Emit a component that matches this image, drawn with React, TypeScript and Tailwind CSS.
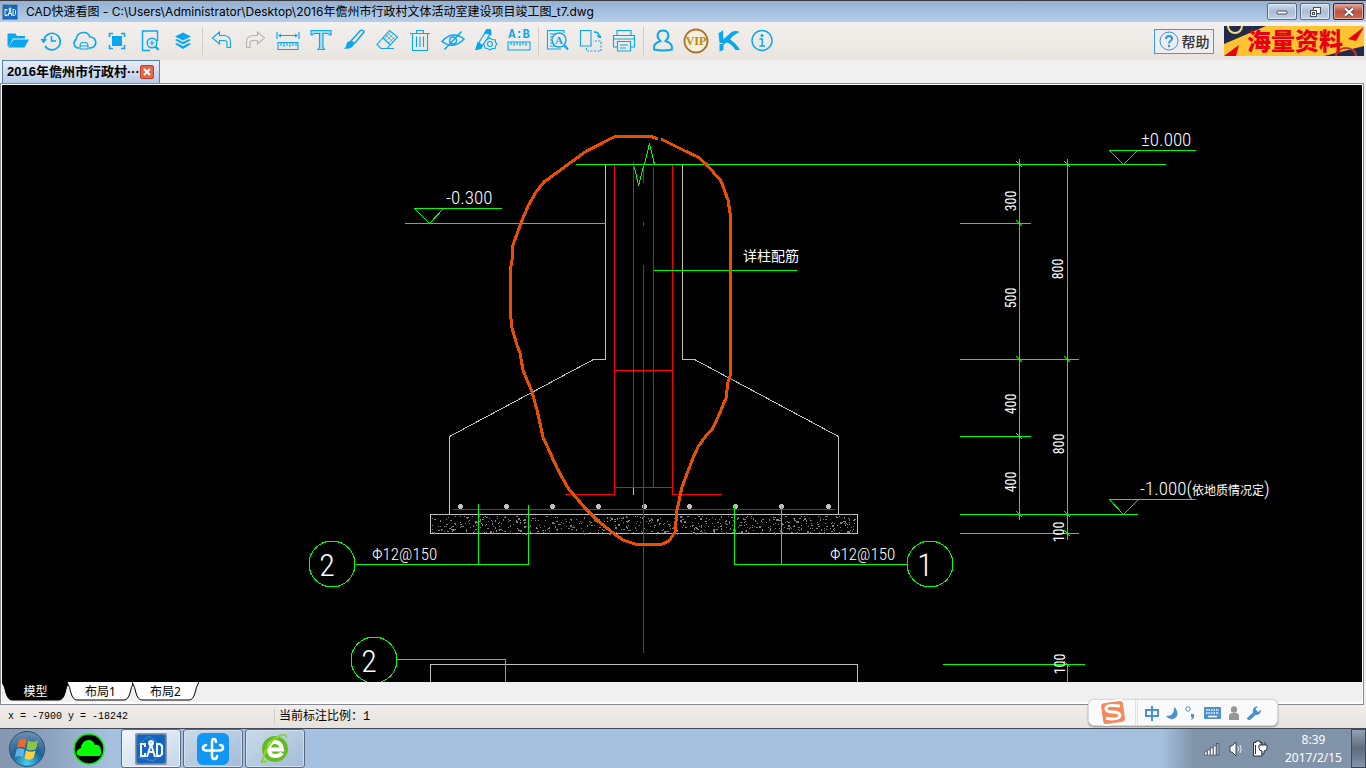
import React, { useState } from 'react';
import clsx from 'clsx';

type Line = [number, number, number, number];

const TITLE_FONT = "font-['Inter','Noto_Sans_CJK_SC',sans-serif]";
const UI_FONT = "font-['Noto_Sans','Noto_Sans_CJK_SC',sans-serif]";
const MONO_FONT = "font-['Liberation_Mono','Noto_Sans_CJK_SC',monospace]";
const CAD_FONT = "font-['Roboto_Condensed','Roboto','Noto_Sans_CJK_SC',sans-serif]";

const GREEN_LINES: Line[] = [
  // ground level and left elevation
  [576, 164, 1165, 164],
  [414, 208, 501, 208],
  [405, 223, 605, 223],
  [654, 270, 796, 270],
  // rebar leaders
  [478, 504, 478, 564],
  [528, 505, 528, 564],
  [356, 564, 528, 564],
  [734, 505, 734, 564],
  [781, 506, 781, 564],
  [735, 564, 907, 564],
  [397, 659, 505, 659],
  [505, 659, 505, 684],
  // dimension chains
  [1019, 159, 1019, 519],
  [1067, 159, 1067, 539],
  [1067, 664, 1067, 684],
  [960, 223, 1030, 223],
  [960, 359, 1078, 359],
  [960, 436, 1030, 436],
  [960, 514, 1137, 514],
  [960, 533, 1078, 533],
  [943, 664, 1084, 664],
  // right elevations
  [1109, 150, 1195, 150],
  [1109, 499, 1195, 499],
];

const RED_LINES: Line[] = [
  [614, 165, 614, 494],
  [633, 162, 633, 487],
  [643, 165, 643, 182],
  [643, 222, 643, 225],
  [643, 265, 643, 652],
  [653, 167, 653, 487],
  [672, 165, 672, 494],
  [614, 370, 672, 370],
  [614, 487, 672, 487],
  [565, 494, 614, 494],
  [672, 494, 721, 494],
];

const TICKS: [number, number][] = [
  [1019, 164], [1019, 223], [1019, 359], [1019, 436], [1019, 514],
  [1067, 164], [1067, 359], [1067, 514], [1067, 533], [1067, 664],
];

const REBARS = [460, 506, 552, 598, 644, 689, 735, 781, 828];

const DIMENSIONS = [
  { text: '300', x: 1016, y: 201 },
  { text: '500', x: 1016, y: 298 },
  { text: '400', x: 1016, y: 404 },
  { text: '400', x: 1016, y: 482 },
  { text: '800', x: 1063, y: 269 },
  { text: '800', x: 1064, y: 444 },
  { text: '100', x: 1064, y: 532 },
  { text: '100', x: 1065, y: 664 },
];

const BUBBLES = [
  { label: '2', cx: 332, cy: 564 },
  { label: '1', cx: 930, cy: 564 },
  { label: '2', cx: 374, cy: 660 },
];

const CLOUD_MARK =
  'M658 139 L650 136 L616 136 L606 141 L585 152 L544 182 L536 192 L528 206 L521 223 L513 245 L512 260 L510 273 L510 309 L512 328 L516 342 L520 353 L523 370 L532 392 L537 410 L543 437 L557 468 L568 488 L585 508 L597 520 L613 533 L623 540 L635 544 L662 544 L669 541 L675 532 L677 510 L682 487 L693 458 L698 447 L705 437 L713 428 L718 417 L726 398 L728 382 L730 376 L730 213 L728 200 L721 181 L706 164 L698 157 L683 150 L661 139';

// aggregate speckles of the concrete bed
const speckles = (() => {
  let seed = 7;
  const next = () => {
    seed = (seed * 16807) % 2147483647;
    return seed / 2147483647;
  };
  const result: { x: number; y: number; w: number; h: number }[] = [];
  for (let i = 0; i < 620; i++) {
    result.push({
      x: 431 + Math.floor(next() * 425),
      y: 515 + Math.floor(next() * 18),
      w: next() > 0.8 ? 2 : 1,
      h: next() > 0.85 ? 2 : 1,
    });
  }
  return result;
})();

const Drawing: React.FC = () => (
  <svg
    viewBox="2 85 1360 597"
    preserveAspectRatio="xMidYMid slice"
    className="w-full h-full bg-black"
    role="img"
    aria-label="基础剖面图"
  >
    <g transform="translate(0.5 0.5)" fill="none" strokeWidth="1" strokeLinecap="square" shapeRendering="crispEdges">
      <g stroke="#c0c0c0">
        <path d="M605 165 V359 H593 L449 436 V514" />
        <path d="M682 165 V359 H694 L838 436 V514" />
        <path d="M633 487 V494" />
        <rect x="430" y="514" width="427" height="19" />
        <path d="M430 684 V664 H857 V684" />
      </g>
      {speckles.map((s, i) => (
        <rect key={i} x={s.x} y={s.y} width={s.w} height={s.h} fill="#808080" />
      ))}
      {REBARS.map(x => (
        <circle key={x} cx={x} cy="506" r="2.5" fill="#c0c0c0" />
      ))}
      <g stroke="#ff0000">
        <path d="M453 509 H834" />
        {RED_LINES.map(([x1, y1, x2, y2], i) => (
          <line key={i} x1={x1} y1={y1} x2={x2} y2={y2} />
        ))}
      </g>
      <g stroke="#00ff00">
        {GREEN_LINES.map(([x1, y1, x2, y2], i) => (
          <line key={i} x1={x1} y1={y1} x2={x2} y2={y2} />
        ))}
        <path d="M634 167 L638 185 L643 166 M644 164 L649 143 L654 164" />
        <path d="M414 208 L429 223 L443 208" />
        <path d="M1109 150 L1123 164 L1137 150" />
        <path d="M1109 499 L1123 514 L1138 499" />
        {TICKS.map(([x, y]) => (
          <path key={`${x}-${y}`} d={`M${x - 3} ${y - 3} l5 5`} />
        ))}
      </g>
    </g>
    <g fill="none" shapeRendering="crispEdges">
      {BUBBLES.map(b => (
        <circle key={`${b.cx}-${b.cy}`} cx={b.cx} cy={b.cy} r="23" stroke="#00ff00" />
      ))}
      <path d={CLOUD_MARK} stroke="#e85000" strokeWidth="3" strokeLinejoin="round" />
    </g>

    <g fill="#ffffff" className={CAD_FONT}>
      <g fontSize="19" fontWeight="300">
        <text x="446" y="204">-0.300</text>
        <text x="1141" y="146">±0.000</text>
        <text x="1140" y="495">
          -1.000(<tspan fontSize="12" fontWeight="400">依地质情况定</tspan>)
        </text>
      </g>
      <g fontSize="17" fontWeight="300">
        <text x="372" y="560">Φ12@150</text>
        <text x="830" y="560">Φ12@150</text>
      </g>
      <text x="743" y="261" fontSize="14">详柱配筋</text>
      {BUBBLES.map(b => (
        <text
          key={`${b.cx}-${b.cy}`}
          x={b.cx - 5}
          y={b.cy + 12}
          fontSize="32"
          fontWeight="300"
          textAnchor="middle"
        >
          {b.label}
        </text>
      ))}
      {DIMENSIONS.map(d => (
        <text
          key={`${d.x}-${d.y}`}
          fontSize="14"
          textAnchor="middle"
          transform={`translate(${d.x} ${d.y}) rotate(-90)`}
        >
          {d.text}
        </text>
      ))}
    </g>
  </svg>
);

interface Tool {
  name: string;
  icon: React.ReactNode;
}

const FILE_TOOLS: Tool[] = [
  {
    name: '打开',
    icon: (
      <g fill="currentColor" stroke="none">
        <path d="M1.500 17 V4.500 H9.500 L11 7 H19 V9.500 H7 L3 17 Z" />
        <path d="M7.500 10.500 H23 L18.500 18.500 H2 Z" />
      </g>
    ),
  },
  {
    name: '最近',
    icon: (
      <>
        <path d="M6 17 A8.300 8.300 0 1 0 5 10.500" strokeWidth="1.600" />
        <path d="M1.500 10 H8 L4.500 14.500 Z" fill="currentColor" stroke="none" />
        <path d="M12.500 7 V12 H17" strokeWidth="1.600" />
      </>
    ),
  },
  {
    name: '云盘',
    icon: (
      <>
        <path d="M7 19 H5.500 A4.800 4.800 0 0 1 4 10.500 Q5 4 11 3.500 Q16 3 18 8 A5.500 5.500 0 0 1 18.500 19 H17" strokeWidth="1.600" />
        <path d="M8 17.500 Q8 13.500 10.500 13.500 H13.500 Q16 13.500 16 17.500 V20 H8 Z M8 17 H16" />
      </>
    ),
  },
  {
    name: '全图',
    icon: (
      <>
        <rect x="7" y="7" width="10" height="10" fill="currentColor" stroke="none" />
        <path d="M4.500 8 V4.500 H8 M16 4.500 H19.500 V8 M19.500 16 V19.500 H16 M8 19.500 H4.500 V16" strokeWidth="1.600" />
      </>
    ),
  },
  {
    name: '窗口缩放',
    icon: (
      <>
        <path d="M12 21.500 H4.500 V2 H19.500 V12" strokeWidth="1.400" />
        <circle cx="14" cy="14" r="4.800" strokeWidth="1.400" />
        <path d="M17.500 17.500 L20.500 21" strokeWidth="2" />
        <path d="M11.500 14 H16.500 M14 11.500 V16.500" />
      </>
    ),
  },
  {
    name: '图层',
    icon: (
      <g fill="currentColor" stroke="none">
        <path d="M12 3.500 L20 7.500 L12 11.500 L4 7.500 Z" />
        <path d="M4 11 L6 10 L12 13 L18 10 L20 11 L12 15.500 Z" />
        <path d="M4 15 L6 14 L12 17 L18 14 L20 15 L12 20 Z" />
      </g>
    ),
  },
];

const EDIT_TOOLS: Tool[] = [
  {
    name: '撤销',
    icon: <path d="M2.500 9 L9.500 3 V6.500 H14 Q20.500 7 20.500 13 V18.500 H17 V14 Q17 11.500 14 11.500 H9.500 V15 Z" />,
  },
  {
    name: '恢复',
    icon: (
      <path
        d="M21.500 9 L14.500 3 V6.500 H10 Q3.500 7 3.500 13 V18.500 H7 V14 Q7 11.500 10 11.500 H14.500 V15 Z"
        stroke="#b5b5b5"
      />
    ),
  },
  {
    name: '测量',
    icon: (
      <>
        <path d="M1 3 V10 M23 3 V10 M3 6.500 H21" />
        <path d="M2 6.500 L5 4.500 V8.500 Z M22 6.500 L19 4.500 V8.500 Z" fill="currentColor" stroke="none" />
        <path d="M2 13.500 H22 V20.500 H2 Z M5 14 V17 M8 14 V18 M11 14 V17 M14 14 V18 M17 14 V17 M20 14 V17" />
      </>
    ),
  },
  {
    name: '文字',
    icon: (
      <path
        d="M2 1.500 H22 V6 H20.500 Q20 4.500 18 4.500 H14 V18 L15.500 20.500 H9 L10.500 18 V4.500 H6 Q4 4.500 3.500 6 H2 Z"
        fill="#9fdcf7"
      />
    ),
  },
  {
    name: '画线',
    icon: (
      <>
        <path d="M9 12 L18.500 1.500 Q21.500 0.500 22 3 L12.500 14.500 Z" strokeWidth="1.500" />
        <path d="M7.500 12 Q11 12.500 12 15.500 Q9 21 2 19.500 Q4.500 18 4.500 15 Q5 12.500 7.500 12 Z" fill="currentColor" stroke="none" />
      </>
    ),
  },
  {
    name: '删除',
    icon: (
      <>
        <path d="M11 19.500 L6 19.500 L2 15.500 L14.500 1.500 L22.500 8 L12 19.500 H19" />
        <path d="M8 9 L15.500 16" />
        <path d="M11 6 L18 13 M13 4 L20 11 M18 5.500 L10.500 12 M20 8 L13 14.500 M15.500 3 L9 10" strokeWidth="0.700" />
      </>
    ),
  },
  {
    name: '回收',
    icon: <path d="M2 4.500 H22 M8.500 4.500 V1.500 H15.500 V4.500 M4.500 5 V21.500 H19.500 V5 M8.500 7.500 V18 M12 7.500 V18 M15.500 7.500 V18" />,
  },
  {
    name: '隐藏',
    icon: (
      <>
        <path d="M1 12.500 Q11 1 23 10 Q13 21 1 12.500 Z" strokeWidth="1.500" />
        <circle cx="12" cy="11.500" r="3.500" strokeWidth="1.500" />
        <path d="M3.500 20.500 L20.500 2.500" strokeWidth="1.500" />
      </>
    ),
  },
  {
    name: '设置',
    icon: (
      <>
        <path d="M2 20 L4 15 L12 2.500 L16 1 L16.500 4.500 L9 16 L7 19 Z" />
        <path d="M2 20.500 L4 13.500 L8 16 L7 19.500 Z M10.500 4 L12.500 0.500 L16.500 0.500 L17 5.500 Z" fill="currentColor" />
        <path d="M13 10.500 L15.500 9 L18 10.500 L21.500 11 V13.500 L23 15 L21.500 17 L21 19.500 L18 19.500 L16 21 L13.500 19.500 L11 19 L10.500 16.500 L9.500 15 L11 13 Z" fill="#eeebe7" />
        <circle cx="16" cy="15" r="2.500" />
      </>
    ),
  },
  {
    name: '比例',
    icon: (
      <>
        <text x="12" y="9" textAnchor="middle" fontSize="12" fontWeight="700" fill="currentColor" stroke="none" className="font-['Liberation_Mono',monospace]">
          A:B
        </text>
        <path d="M1 13 H23 V21 H1 Z M4 13 V16 M7 13 V17 M10 13 V16 M13 13 V17 M16 13 V16 M19 13 V17" />
      </>
    ),
  },
];

const OUTPUT_TOOLS: Tool[] = [
  {
    name: '查找文字',
    icon: (
      <>
        <path d="M18 4 V1.500 H1.500 V20 H15 M4 5 H9 M4 8 H7 M4 11 H6 M4 14 H7 M4 17 H9" />
        <circle cx="13" cy="11" r="7" strokeWidth="1.400" fill="#eeebe7" />
        <path d="M18 16 L22 20.500" strokeWidth="2" />
        <text x="13" y="15" textAnchor="middle" fontSize="11" fontWeight="700" fill="currentColor" stroke="none" className="font-['Liberation_Serif',serif]">
          A
        </text>
      </>
    ),
  },
  {
    name: '转换',
    icon: (
      <>
        <path d="M1.500 1.500 H12 V17 H1.500 Z" />
        <path d="M7.500 19 V22 H22 V12 H14" strokeDasharray="2 1.500" />
        <path d="M15 3 Q20 3 20 7" strokeWidth="1.600" />
        <path d="M17 6.500 H22 V9 H20 Z" fill="currentColor" stroke="none" />
      </>
    ),
  },
  {
    name: '打印',
    icon: (
      <>
        <path d="M5 6.500 V1.500 H19 V6.500 M5.500 18 H1.500 V6.500 H22.500 V18 H18.500 M1.500 10 H22.500" />
        <path d="M5.500 12.500 H18.500 V22 H5.500 Z M8 16 H16 M8 19 H14" />
      </>
    ),
  },
];

const ACCOUNT_TOOLS: Tool[] = [
  {
    name: '用户',
    icon: (
      <path
        d="M8 10.500 C5 6 7 1.500 12 1.500 C17 1.500 19 6 16 10.500 L14.500 12 C19.500 13.500 21.500 17 21 20.500 Q12 22.500 3 20.500 C2.500 17 4.500 13.500 9.500 12 Z"
        strokeWidth="1.900"
      />
    ),
  },
  {
    name: 'VIP会员',
    icon: (
      <g className="text-[#bd8a10]">
        <circle cx="12" cy="12" r="11.500" strokeWidth="1.800" stroke="#a8742c" fill="#f5efdf" />
        <text x="12" y="16" textAnchor="middle" fontSize="12" fontWeight="700" fill="currentColor" stroke="none" className="font-['Liberation_Serif',serif]">
          VIP
        </text>
      </g>
    ),
  },
  {
    name: '快看',
    icon: (
      <g fill="currentColor" stroke="none">
        <path d="M1.500 4 Q3 4 6 1 L6.500 14 H2.500 Z M2.500 15 H6.500 V21 L2.500 22.500 Z" />
        <path d="M5 11.500 L14 3.500 Q18 1 22.500 3 L19 5 Q16 6 13 10.500 Q19 14 23 21 L18.500 21 Q15 15 9.500 13.500 L6 16 Z" />
      </g>
    ),
  },
  {
    name: '关于',
    icon: (
      <>
        <circle cx="12" cy="11.500" r="10" strokeWidth="1.400" />
        <circle cx="12" cy="6.500" r="1.500" fill="currentColor" stroke="none" />
        <path d="M9.500 10 H12.200 V16.500 M9.500 17 H15" strokeWidth="1.400" />
      </>
    ),
  },
];

const ToolButton: React.FC<Tool> = ({ name, icon }) => (
  <button aria-label={name} className="flex w-[33px] h-full items-center justify-center text-[#08a7f0]">
    <svg width="24" height="24" viewBox="0 0 24 24" fill="none" stroke="currentColor" strokeWidth="1.100" className="shrink-0 overflow-visible">
      {icon}
    </svg>
  </button>
);

const Separator: React.FC = () => (
  <div className="flex w-[6px] justify-center">
    <div className="w-px h-7 bg-[#cfcbc7]" />
  </div>
);

const CadLogo: React.FC<{ className?: string }> = ({ className }) => (
  <svg viewBox="0 0 32 32" className={className}>
    <rect x="0.500" y="0.500" width="31" height="31" rx="3" fill="#1565bd" stroke="#8d99a8" strokeWidth="2" />
    <path d="M3 12 L14 3 L29 15 M3 24 L18 28 L29 20" stroke="#3d8be0" fill="none" />
    <g fill="none" stroke="#f2f7fc" strokeWidth="2">
      <path d="M10 14 V11 H6 V23 H10 V20" />
      <path d="M12 24 L16 11 L20 24 M13 19 H19" />
      <path d="M22 11 H25 L27 13 V21 L25 23 H22 Z" />
      <circle cx="16" cy="10" r="2" />
    </g>
  </svg>
);

const TitleBar: React.FC = () => (
  <header className="flex h-[22px] items-center border-t border-[#3a3a3e] bg-gradient-to-b from-[#94b1d2] to-[#b6cfea] pl-[2px] pr-[2px]">
    <CadLogo className="w-4 h-4 shrink-0" />
    <h1 className={clsx(TITLE_FONT, 'ml-2 flex-1 truncate text-[12px] leading-4 text-black')}>
      CAD快速看图 - C:\Users\Administrator\Desktop\2016年儋州市行政村文体活动室建设项目竣工图_t7.dwg
    </h1>
    <div className="flex gap-[3px]">
      <button aria-label="最小化" className="flex w-[30px] h-[17px] items-center justify-center rounded-[2px] border border-[#5c6b80] bg-gradient-to-b from-[#d3dfed] via-[#a9bdd6] to-[#bfd3ea] shadow-[inset_0_0_0_1px_#dbe6f2]">
        <svg width="12" height="6" viewBox="0 0 12 6">
          <rect x="1" y="2" width="10" height="3" rx="1" fill="#fff" stroke="#4a4f58" />
        </svg>
      </button>
      <button aria-label="还原" className="flex w-[30px] h-[17px] items-center justify-center rounded-[2px] border border-[#5c6b80] bg-gradient-to-b from-[#d3dfed] via-[#a9bdd6] to-[#bfd3ea] shadow-[inset_0_0_0_1px_#dbe6f2]">
        <svg width="12" height="12" viewBox="0 0 12 12" fill="#fff" stroke="#4a4f58">
          <rect x="4.500" y="1.500" width="7" height="6" />
          <rect x="1.500" y="4.500" width="6" height="6" />
          <rect x="3.500" y="6.500" width="2" height="2" />
        </svg>
      </button>
      <button aria-label="关闭" className="flex w-[31px] h-[17px] items-center justify-center rounded-[2px] border border-[#4b1a20] bg-gradient-to-b from-[#e0a79b] via-[#c1513f] to-[#cf6a55] shadow-[inset_0_0_0_1px_#e3a99d]">
        <svg width="12" height="10" viewBox="0 0 12 10" fill="none">
          <path d="M2 1.500 L10 8.500 M10 1.500 L2 8.500" stroke="#4a4f58" strokeWidth="4" />
          <path d="M2 1.500 L10 8.500 M10 1.500 L2 8.500" stroke="#fff" strokeWidth="2.200" />
        </svg>
      </button>
    </div>
  </header>
);

const Banner: React.FC = () => (
  <a href="#materials" aria-label="海量资料">
    <svg width="140" height="30" viewBox="0 0 140 30" className="overflow-visible font-['Noto_Sans_CJK_SC',sans-serif]">
      <rect width="140" height="30" fill="#fec430" />
      <path d="M0 0 H42 L0 18 Z" fill="#232a45" />
      <path d="M100 30 L140 20 V30 Z" fill="#232a45" />
      <path d="M4 0 A7 7 0 0 0 18 0" fill="none" stroke="#f3dc86" strokeWidth="2" />
      <path d="M112 30 A10 8 0 0 1 132 30" fill="none" stroke="#c8342f" strokeWidth="2" />
      <path d="M15 19 L12 30 H0 Z M140 1 L124 13 L132 15 Z" fill="#e60012" />
      <text x="71" y="24" textAnchor="middle" fontSize="24" fontWeight="900" fill="#e60012">
        海量资料
      </text>
    </svg>
  </a>
);

const Toolbar: React.FC = () => (
  <div className="flex h-[38px] items-center bg-gradient-to-b from-[#f3f0ed] to-[#e9e4e0] pl-px pr-[2px]">
    <div className="flex h-9 flex-1 items-center">
      {FILE_TOOLS.map(t => <ToolButton key={t.name} {...t} />)}
      <Separator />
      {EDIT_TOOLS.map(t => <ToolButton key={t.name} {...t} />)}
      <Separator />
      {OUTPUT_TOOLS.map(t => <ToolButton key={t.name} {...t} />)}
      <Separator />
      {ACCOUNT_TOOLS.map(t => <ToolButton key={t.name} {...t} />)}
    </div>
    <button className="mr-[10px] flex w-[60px] h-[25px] items-center justify-center gap-[3px] border border-[#3f9be8] bg-[#efedf0]">
      <svg width="20" height="20" viewBox="0 0 20 20" fill="none" stroke="#2b95e9">
        <circle cx="10" cy="10" r="9" />
        <path d="M7 8 Q7 5 10 5 Q13 5 13 7.500 Q13 9 11.500 10 Q10 11 10 12.500" strokeWidth="2" />
        <circle cx="10" cy="15" r="1.200" fill="#2b95e9" stroke="none" />
      </svg>
      <span className="font-['Noto_Sans_CJK_SC',sans-serif] text-[14px] leading-5 font-medium text-[#333]">帮助</span>
    </button>
    <Banner />
  </div>
);

const LAYOUTS = ['模型', '布局1', '布局2'];

const LayoutTabs: React.FC = () => {
  const [active, setActive] = useState('模型');

  return (
    <nav className="flex h-[20px] bg-[#f0f0f0]">
      {LAYOUTS.map(name => (
        <button
          key={name}
          onClick={() => setActive(name)}
          className={clsx(
            UI_FONT,
            'relative -mr-[2px] w-[67px] h-[19px] text-[12px] leading-[18px]',
            active === name ? 'text-white' : 'text-black'
          )}
        >
          <svg viewBox="0 0 67 19" className="absolute inset-0 w-full h-full">
            <path
              d="M0 0 Q3 5 4 11 Q6 18 10 18 H57 Q61 18 63 11 Q64 5 67 0"
              fill={active === name ? '#000' : '#fff'}
              stroke="#000"
            />
          </svg>
          <span className="relative">{name}</span>
        </button>
      ))}
    </nav>
  );
};

const InputMethodBar: React.FC = () => (
  <div className="absolute right-[88px] bottom-[42px] flex w-[190px] h-[27px] items-center rounded-[6px] border border-[#d9d9d9] bg-[#fafafa] shadow-[0_1px_2px_#8a8a8a]">
    <svg width="30" height="27" viewBox="0 0 30 27" className="ml-[9px]">
      <rect x="3" y="2" width="24" height="23" rx="4" transform="rotate(-8 15 13)" fill="#f5895c" stroke="#fff" strokeWidth="2" />
      <path d="M22 7 Q8 5 8 9.500 Q8 13 15 13 Q22 13 22 17 Q21 21 8 19.500" fill="none" stroke="#fff" strokeWidth="3" />
    </svg>
    <div className="ml-[7px] w-[3px] h-full border-x border-[#f5d9d9]" />
    <div className="ml-[6px] flex items-center gap-1">
      <button aria-label="中文" className="w-4 h-4">
        <svg viewBox="0 0 16 16" fill="none" stroke="#4a90d2" strokeWidth="2">
          <path d="M2 5 H14 V11 H2 Z M8 1 V16" />
        </svg>
      </button>
      <button aria-label="半角" className="w-4 h-4">
        <svg viewBox="0 0 16 16">
          <path d="M10 2 Q11 11 2 11 Q5 15 9 14 Q15 12 13 6 Q12 3 10 2 Z" fill="#4a90d2" />
        </svg>
      </button>
      <button aria-label="中文标点" className="w-4 h-4">
        <svg viewBox="0 0 16 16">
          <circle cx="4" cy="4" r="2.200" fill="none" stroke="#4a90d2" />
          <path d="M7 9 H10 Q11 13 7 15 L8 12 H7 Z" fill="#4a90d2" />
        </svg>
      </button>
      <button aria-label="软键盘" className="w-[18px] h-4">
        <svg viewBox="0 0 18 16">
          <rect x="0" y="2" width="17" height="12" rx="1" fill="#4a90d2" />
          <path d="M2 5 H15 M2 8 H15" stroke="#fff" strokeWidth="1.500" strokeDasharray="1.500 1" />
          <path d="M4 11.500 H13" stroke="#fff" strokeWidth="1.500" />
        </svg>
      </button>
      <button aria-label="登录" className="w-4 h-4">
        <svg viewBox="0 0 16 16" fill="#979797">
          <circle cx="8" cy="4.500" r="3.200" />
          <path d="M3 15 V10 Q4 8 6 8 H10 Q12 8 13 10 V15 Z" />
        </svg>
      </button>
      <button aria-label="工具" className="w-4 h-4">
        <svg viewBox="0 0 16 16">
          <path d="M1 13 L7 7.500 Q6 3 10 1.500 H12 L9.500 4 L12 7 L15 4.500 Q15 10 9.500 10 L4 15 Q1 15 1 13 Z" fill="#4a90d2" />
        </svg>
      </button>
    </div>
  </div>
);

const Taskbar: React.FC = () => (
  <footer className="flex h-10 items-stretch border-t border-[#3e4a59] bg-[linear-gradient(to_right,#8496ae_0,#8ba0bb_45px,#a5c1df_110px,#a5c1df_calc(100%-205px),#8193a9_calc(100%-172px))]">
    <button aria-label="开始" className="ml-2 w-[38px]">
      <svg viewBox="0 0 38 38">
        <defs>
          <radialGradient id="orb" cx="50%" cy="90%" r="90%">
            <stop offset="0" stopColor="#41d2f5" />
            <stop offset="0.500" stopColor="#1c6296" />
            <stop offset="1" stopColor="#6f93b3" />
          </radialGradient>
        </defs>
        <circle cx="19" cy="19" r="17.500" fill="url(#orb)" stroke="#2b4c6b" />
        <path d="M11 10 Q14 7.500 18.500 9.500 L17 18 Q13 15.500 9 18 Z" fill="#ee6a2c" />
        <path d="M20 10.500 Q25 13 30 10.500 L28 19 Q23 21.500 18.500 19 Z" fill="#8cc63e" />
        <path d="M8.500 19.500 Q12 17 16.500 19.500 L15 27 Q11 25 7 27 Z" fill="#5db3ec" />
        <path d="M18 20.500 Q23 23 27.500 20.500 L25.500 28 Q21 31 16.500 28.500 Z" fill="#fdcf3c" />
      </svg>
    </button>
    <button aria-label="云" className="ml-[27px] mr-4 w-8">
      <svg viewBox="0 0 32 32">
        <circle cx="16" cy="16" r="15" fill="#000" stroke="#00f800" strokeWidth="1.500" />
        <path d="M4 22 Q2 17 8 15 Q9 7 16 7 Q20 7 22 12 Q27 11 28 17 Q29 22 26 23 H7 Z" fill="#00ff00" />
      </svg>
    </button>
    <div className="flex flex-1 gap-[2px]">
      <button aria-label="CAD快速看图" className="flex w-[60px] items-center justify-center rounded-[3px] border border-[#5a6b80] bg-gradient-to-br from-[#f2f6fa] to-[#c3d5e8] shadow-[inset_0_0_0_1px_#eef4fa]">
        <CadLogo className="w-8 h-8" />
      </button>
      <button aria-label="传输" className="flex w-[60px] items-center justify-center rounded-[3px] border border-[#5a6b80] bg-gradient-to-br from-[#cbdaea] to-[#a3bcd8] shadow-[inset_0_0_0_1px_#d2dfed]">
        <svg width="32" height="32" viewBox="0 0 32 32">
          <rect width="32" height="32" rx="6" fill="#1296f3" />
          <path d="M19 9 Q19 6 16.500 6 Q15 6 15 9 V23 Q15 26 17.500 26 Q20 26 20 23 M9 12 Q6 13 6 15 Q6 17.500 9 17.500 H22 Q26 17.500 26 15 Q26 12 23 12" fill="none" stroke="#fff" strokeWidth="2.500" strokeLinecap="round" />
        </svg>
      </button>
      <button aria-label="浏览器" className="flex w-[60px] items-center justify-center rounded-[3px] border border-[#5a6b80] bg-gradient-to-br from-[#cbdaea] to-[#a3bcd8] shadow-[inset_0_0_0_1px_#d2dfed]">
        <svg width="32" height="32" viewBox="0 0 32 32" fill="none">
          <circle cx="16" cy="16" r="13" fill="#66bb1f" />
          <path d="M23 20 Q21 23 16 23 Q10 23 10 16 Q10 9 16 9 Q22 9 23 16.500 H11" stroke="#fff" strokeWidth="4" />
          <path d="M4 26 Q0 31 8 28 M27 5 Q29 0 20 3 Q8 9 4 26" stroke="#8bd339" strokeWidth="2" />
        </svg>
      </button>
    </div>
    <div className="flex items-center gap-[9px]">
      <svg width="16" height="14" viewBox="0 0 16 14" fill="#fff" stroke="#3b4654" strokeWidth="0.600">
        <rect x="0.500" y="10" width="2.500" height="3" />
        <rect x="3.500" y="8" width="2.500" height="5" />
        <rect x="6.500" y="6" width="2.500" height="7" />
        <rect x="9.500" y="4" width="2.500" height="9" />
        <rect x="12.500" y="1.500" width="2.500" height="11.500" fill="#9aa7b8" />
      </svg>
      <svg width="14" height="16" viewBox="0 0 14 16" fill="none">
        <path d="M1 5 H3 L7 1 V15 L3 11 H1 Z" fill="#fff" stroke="#3b4654" />
        <path d="M9 5.500 Q10.500 8 9 10.500 M11 4 Q13.500 8 11 12" stroke="#e5ecf5" />
      </svg>
      <svg width="16" height="17" viewBox="0 0 16 17" fill="none">
        <path d="M1.500 2.500 H4 V1 H8 V2.500 H10 V16 H1.500 Z" fill="#fff" stroke="#2b333e" />
        <path d="M3.500 5 V14" stroke="#2b333e" />
        <path d="M7 5 H15 V8 Q15 11 12 11 V14 H10 V11 Q7 11 7 8 Z M9 5 V2 M13 5 V2" fill="#fff" stroke="#2b333e" />
      </svg>
    </div>
    <time className={clsx(UI_FONT, 'ml-2 flex w-[75px] flex-col justify-center text-center text-[12px] leading-[18px] text-white')}>
      <span>8:39</span>
      <span>2017/2/15</span>
    </time>
    <button aria-label="显示桌面" className="w-[15px] border border-[#3c4858] bg-gradient-to-b from-[#93a2b5] via-[#5d6b7d] to-[#8594a8]" />
  </footer>
);

export default function App() {
  return (
    <div className="relative flex h-screen flex-col overflow-hidden bg-[#f0f0f0]">
      <TitleBar />
      <Toolbar />

      {/* Open documents */}
      <div className="flex h-[23px] pl-[2px]">
        <div className="flex w-[158px] items-center justify-between border border-b-0 border-[#5482bd] bg-gradient-to-b from-[#e8eef8] to-[#b8cbe6] pl-1 pr-[5px]">
          <span className="font-['Liberation_Sans','Noto_Sans_CJK_SC',sans-serif] text-[13px] leading-4 font-bold whitespace-nowrap text-black">
            2016年儋州市行政村···
          </span>
          <button aria-label="关闭图纸" className="flex w-[14px] h-[14px] shrink-0 items-center justify-center rounded-[2px] border border-[#c43c24] bg-[#e2694a]">
            <svg width="8" height="8" viewBox="0 0 8 8">
              <path d="M1 1 L7 7 M7 1 L1 7" stroke="#fff" strokeWidth="2" />
            </svg>
          </button>
        </div>
      </div>

      {/* Drawing view */}
      <main className="mr-[2px] flex min-h-0 flex-1 flex-col border border-[#828790] bg-white px-px pt-px pb-[2px]">
        <div className="min-h-0 flex-1">
          <Drawing />
        </div>
        <LayoutTabs />
      </main>

      {/* Status bar */}
      <div className={clsx(MONO_FONT, 'flex h-[23px] items-center bg-gradient-to-b from-[#f1eeeb] to-[#e6e2dd] text-[10px] leading-4 text-black')}>
        <span className="w-[274px] pl-2">x = -7900 y = -18242</span>
        <span className="border-l border-[#cfcbc7] pl-1 text-[12px]">当前标注比例：1</span>
      </div>

      <Taskbar />
      <InputMethodBar />
    </div>
  );
}
